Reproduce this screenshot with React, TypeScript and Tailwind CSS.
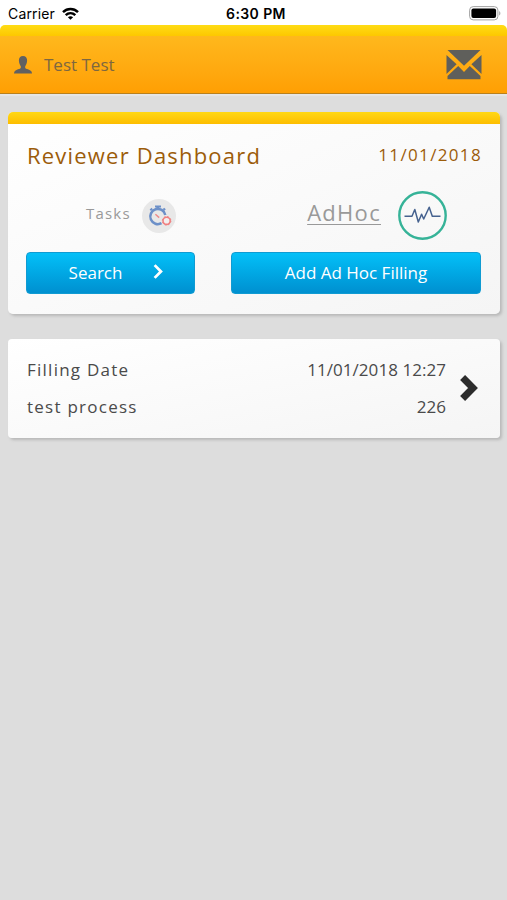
interface Filling {
  id: number;
  name: string;
  date: string;
  count: number;
}

const fillings: Filling[] = [{ id: 1, name: 'test process', date: '11/01/2018 12:27', count: 226 }];

const WifiIcon = ({ className }: { className?: string }) => (
  <svg className={className} viewBox="0 0 17 13" fill="none" stroke="black" strokeWidth="2.5">
    <path d="M1 5.1C5.3 1 11.7 1 16 5.1" />
    <path d="M3.7 8.1C6.5 5.5 10.5 5.5 13.3 8.1" />
    <path d="M8.5 12.8L5.9 10.2C7.4 8.8 9.6 8.8 11.1 10.2Z" fill="black" stroke="none" />
  </svg>
);

const BatteryIcon = ({ className }: { className?: string }) => (
  <svg className={className} viewBox="0 0 32 15">
    <rect x="0.6" y="0.6" width="28.3" height="13.3" rx="3.6" fill="white" stroke="#a3a3a3" strokeWidth="1" />
    <rect x="2.4" y="2.4" width="24.7" height="9.7" rx="2" fill="black" />
    <path d="M30.2 5v4.6c1.6-.8 1.6-3.8 0-4.6Z" fill="#a3a3a3" />
  </svg>
);

const UserIcon = ({ className }: { className?: string }) => (
  <svg className={className} viewBox="0 0 18 18" fill="#616161">
    <path d="M9 0C6.3 0 4.8 1.9 4.9 4.6C5 7.4 6 9.3 6.8 10.2V12C6.5 13 1.8 13.6 .7 15.2C.2 16 0 17 0 17.6H18C18 17 17.8 16 17.3 15.2C16.2 13.6 11.5 13 11.2 12V10.2C12 9.3 13 7.4 13.1 4.6C13.2 1.9 11.7 0 9 0Z" />
  </svg>
);

const MailIcon = ({ className }: { className?: string }) => (
  <svg className={className} viewBox="0 0 36 30" fill="#5f5f5b">
    <path d="M1.5 0H34.5L18 15.8Z" />
    <path d="M.5 5L10.6 14.3L.5 24Z" />
    <path d="M35.5 5L25.4 14.3L35.5 24Z" />
    <path d="M12.2 16L18 22L23.8 16L34.5 26V29.3H1.5V26Z" />
  </svg>
);

const StopwatchIcon = ({ className }: { className?: string }) => (
  <svg className={className} viewBox="0 0 34 34" fill="none">
    <circle cx="17" cy="17" r="17" fill="#e8e8e8" />
    <path d="M19.5 24.2A7.6 7.6 0 1 1 23.3 15.9" stroke="#6d90c8" strokeWidth="2.5" />
    <path d="M15.8 10V7.5" stroke="#6d90c8" strokeWidth="3" />
    <path d="M13 7.4H19M8.3 11.2L10.2 9.6M23.1 11L21.4 9.4" stroke="#6d90c8" strokeWidth="2" />
    <path d="M13.4 15.2L17.2 18.6" stroke="#ee8b8b" strokeWidth="1.5" />
    <circle cx="24.6" cy="21.8" r="3.6" fill="#f3efef" stroke="#f08080" strokeWidth="1.6" />
    <circle cx="24.6" cy="21.8" r="4.3" stroke="#f08080" strokeWidth="1" strokeDasharray="1.7 1.68" />
  </svg>
);

const PulseIcon = ({ className }: { className?: string }) => (
  <svg className={className} viewBox="0 0 49 49" fill="none">
    <circle cx="24.5" cy="24.5" r="23.2" stroke="#36b398" strokeWidth="2.4" />
    <path
      d="M6.5 25.3H14L16.8 18.5L20.3 31L23.6 23.2L25.7 28L31.2 16.2L34.3 25.3H42.5"
      stroke="#46628f"
      strokeWidth="1.5"
      strokeLinejoin="round"
    />
  </svg>
);

const ChevronIcon = ({ className, width }: { className?: string; width: number }) => (
  <svg className={className} viewBox="0 0 18 28" fill="none" stroke="currentColor" strokeWidth={width}>
    <path d="M2.6 3.5L13 14L2.6 24.5" />
  </svg>
);

function StatusBar() {
  return (
    <div className="grid h-[25px] grid-cols-3 items-center bg-white pt-[3px] pr-[6px] pl-2 font-['Inter',sans-serif] text-black">
      <div className="flex items-center gap-[7px]">
        <span className="text-[14px] leading-5 tracking-[0.15px]">Carrier</span>
        <WifiIcon className="mb-0.5 h-[13px] w-[17px]" />
      </div>
      <span className="pl-[3px] text-center text-[14px] leading-5 font-semibold tracking-[0.4px] whitespace-nowrap">
        6:30 PM
      </span>
      <BatteryIcon className="mb-0.5 h-[15px] w-8 justify-self-end" />
    </div>
  );
}

function Header() {
  return (
    <div className="bg-white">
      <header className="overflow-hidden rounded-t-[5px] border-b border-[#b9801c] shadow-[0_2px_1px_#e6e6e6]">
        <div className="h-[11px] bg-linear-to-b from-[#ffdc14] to-[#fdc800]" />
        <div className="flex h-[57px] items-center justify-between bg-linear-to-b from-[#ffb81c] to-[#ff9f03] pr-[25px] pl-[14px]">
          <div className="flex items-center gap-3">
            <UserIcon className="h-[18px] w-[18px]" />
            <span className="text-[17px] leading-6 text-[#7d6740]">Test Test</span>
          </div>
          <MailIcon className="h-[30px] w-[36px]" />
        </div>
      </header>
    </div>
  );
}

function DashboardCard() {
  return (
    <section className="overflow-hidden rounded-[5px] bg-linear-to-br from-white to-[#f5f5f5] shadow-[2px_2px_3px_#b8b8b8]">
      <div className="h-3 bg-linear-to-b from-[#ffd814] to-[#fdbd00]" />
      <div className="px-[18px] pt-[15px] pb-5">
        <div className="flex h-8 items-center justify-between text-[#9c5c0a]">
          <h1 className="pl-px text-[22px] tracking-[1.2px]">Reviewer Dashboard</h1>
          <span className="text-[17px] tracking-[1.35px]">11/01/2018</span>
        </div>
        <div className="mt-5 flex h-[49px] items-center justify-between pr-[35px] pl-[60px] text-[#999]">
          <div className="flex items-center gap-[11px]">
            <span className="mb-1 text-[15px] tracking-[1.2px]">Tasks</span>
            <StopwatchIcon className="h-[34px] w-[34px]" />
          </div>
          <div className="flex items-center gap-[17px]">
            <a className="mb-1.5 text-[22px] tracking-[1.3px] underline decoration-1 underline-offset-[3px]">AdHoc</a>
            <PulseIcon className="h-[49px] w-[49px]" />
          </div>
        </div>
        <div className="mt-3 flex h-[42px] gap-9 pr-px text-[17px] text-white">
          <button className="flex w-[169px] items-center justify-center gap-[31px] rounded-[4px] border border-[#109bd2] bg-linear-to-b from-[#04c0f8] to-[#0090d0] pl-3">
            Search
            <ChevronIcon className="mb-1 h-[17px] w-[11px]" width={4.6} />
          </button>
          <button className="flex-1 rounded-[4px] border border-[#109bd2] bg-linear-to-b from-[#04c0f8] to-[#0090d0]">
            Add Ad Hoc Filling
          </button>
        </div>
      </div>
    </section>
  );
}

function FillingCard({ filling }: { filling: Filling }) {
  return (
    <section className="flex h-[99px] items-center rounded-[4px] bg-linear-to-br from-white to-[#f5f5f5] pr-[22px] pb-0.5 pl-[19px] text-[17px] leading-[37px] text-[#4a4a4a] shadow-[2px_2px_3px_#b8b8b8]">
      <div className="flex-1">
        <div className="flex justify-between">
          <span className="tracking-[1.25px]">Filling Date</span>
          <span className="tracking-[0.05px]">{filling.date}</span>
        </div>
        <div className="flex justify-between">
          <span className="tracking-[1.25px]">{filling.name}</span>
          <span>{filling.count}</span>
        </div>
      </div>
      <ChevronIcon className="ml-[14px] h-7 w-[18px] text-[#2c2c2c]" width={7} />
    </section>
  );
}

export default function App() {
  return (
    <div className="min-h-screen bg-[#dddddd] font-['Open_Sans',sans-serif]">
      <StatusBar />
      <Header />
      <main className="flex flex-col gap-[25px] pt-[18px] pr-[7px] pl-2">
        <DashboardCard />
        {fillings.map((filling) => (
          <FillingCard key={filling.id} filling={filling} />
        ))}
      </main>
    </div>
  );
}
